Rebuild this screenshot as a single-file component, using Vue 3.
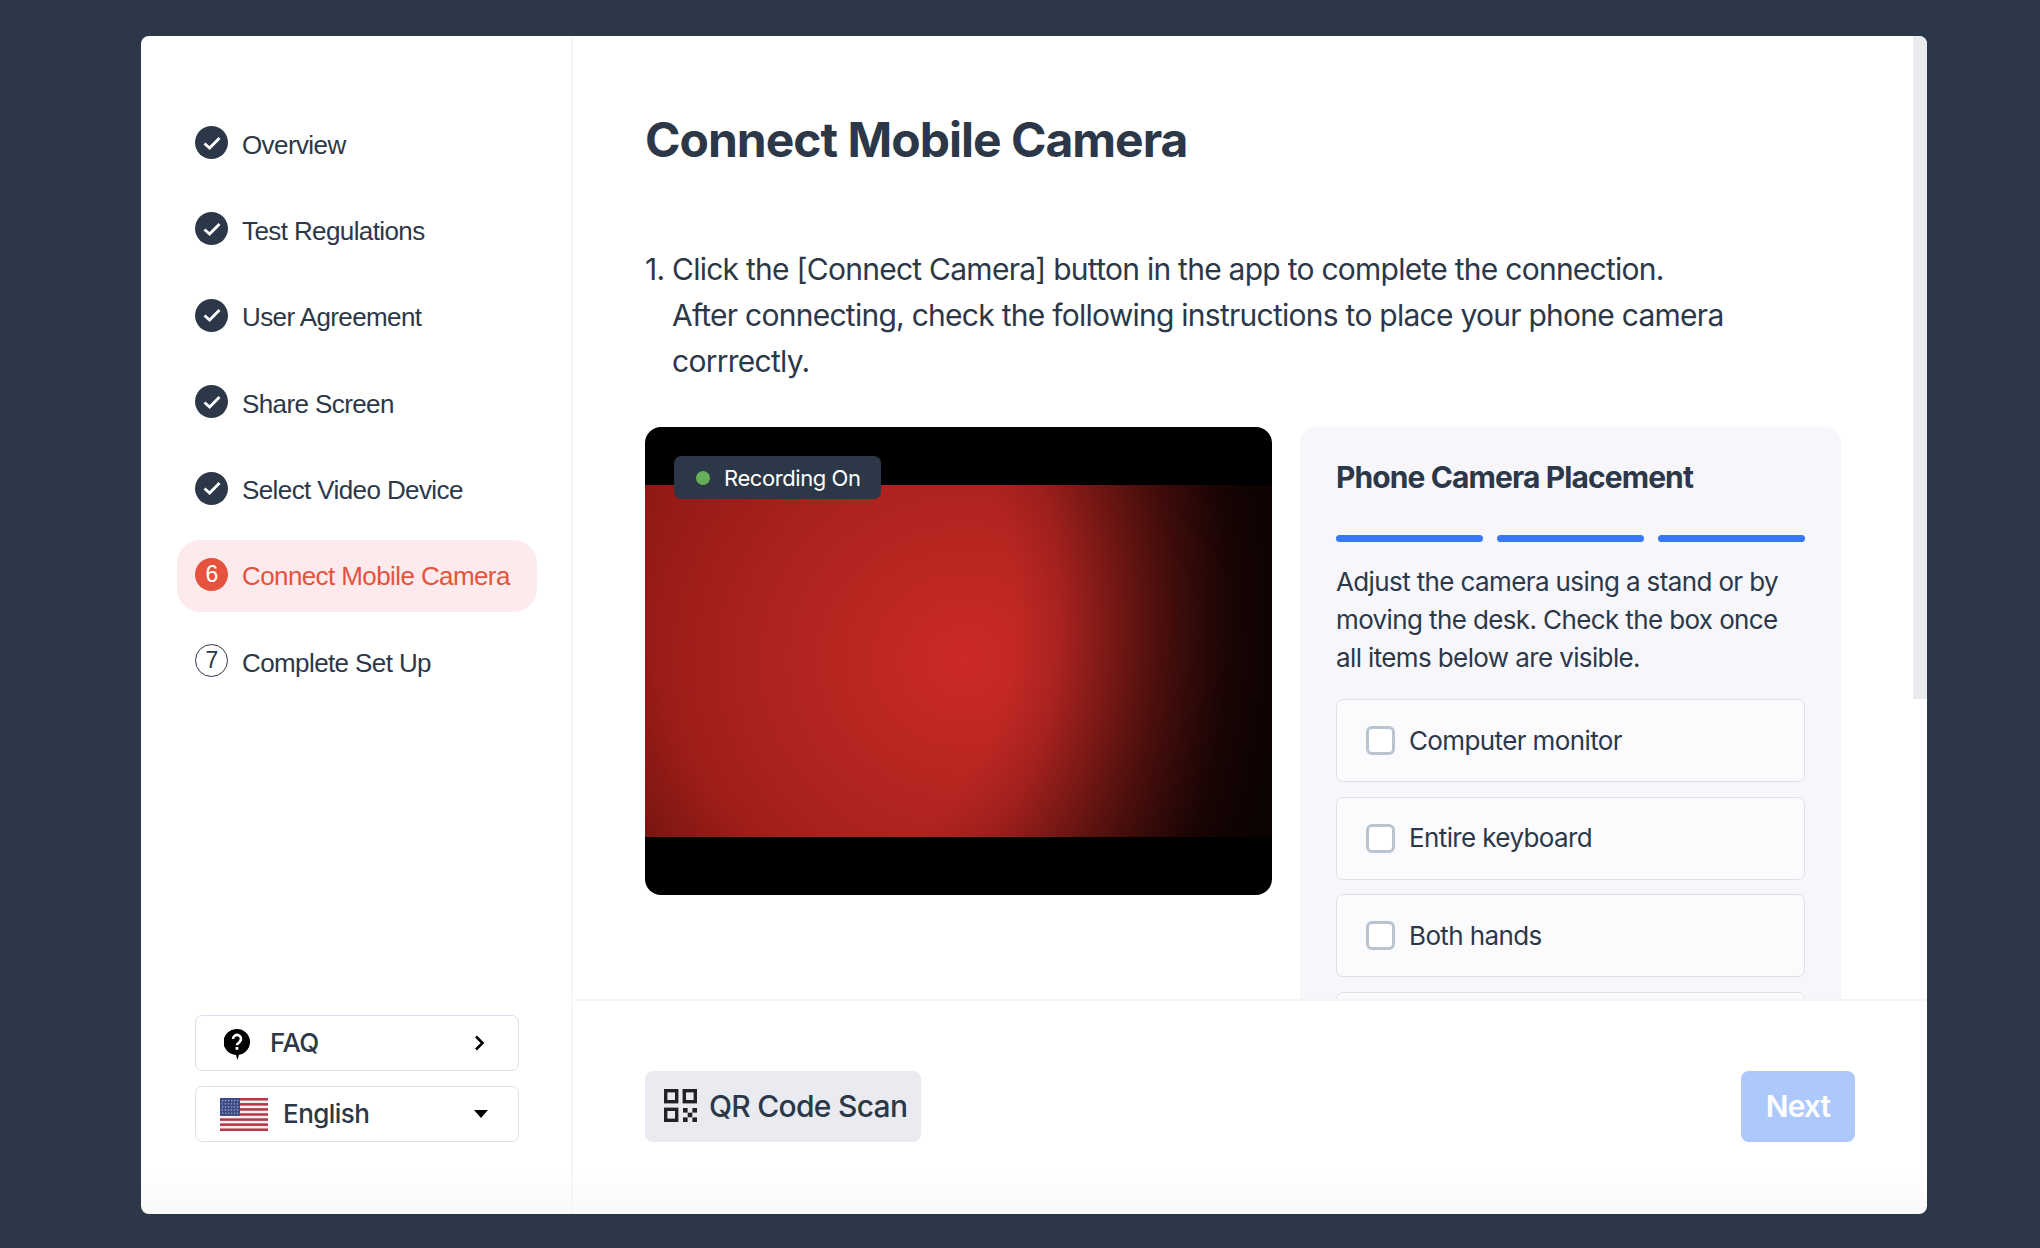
<script setup>
const steps = [
  { label: 'Overview', state: 'done' },
  { label: 'Test Regulations', state: 'done' },
  { label: 'User Agreement', state: 'done' },
  { label: 'Share Screen', state: 'done' },
  { label: 'Select Video Device', state: 'done' },
  { label: 'Connect Mobile Camera', state: 'active', n: 6 },
  { label: 'Complete Set Up', state: 'todo', n: 7 },
]
const checks = ['Computer monitor', 'Entire keyboard', 'Both hands', '']
const stripes = [0, 1, 2, 3, 4, 5, 6]
</script>

<template>
  <div class="page">
    <div class="card">
      <aside class="sidebar">
        <ul class="steps">
          <li v-for="s in steps" :key="s.label" class="step" :class="s.state">
            <span class="badge">
              <svg v-if="s.state === 'done'" width="20" height="16" viewBox="0 0 20 16">
                <path d="M2.5 8.5 L7.6 13 L17.5 3" fill="none" stroke="#fff" stroke-width="2.8" />
              </svg>
              <template v-else>{{ s.n }}</template>
            </span>
            <span class="step-label">{{ s.label }}</span>
          </li>
        </ul>
        <div class="side-bottom">
          <div class="side-btn faq">
            <svg class="faq-icon" width="26" height="31" viewBox="0 0 26 31">
              <path d="M13 0a13 13 0 0 1 2 25.85L13.4 31 12 26A13 13 0 0 1 13 0Z" fill="#000" />
              <path d="M9 10a4 4 0 1 1 6.2 3.3c-1.4.9-2.2 1.5-2.2 3" fill="none" stroke="#fff" stroke-width="2.6" />
              <rect x="11.6" y="18" width="2.8" height="2.8" fill="#fff" />
            </svg>
            <span class="side-label">FAQ</span>
            <svg class="chev" width="12" height="16" viewBox="0 0 12 16">
              <path d="M2 1.5 L8.5 8 L2 14.5" fill="none" stroke="#000" stroke-width="2.6" />
            </svg>
          </div>
          <div class="side-btn lang">
            <svg class="flag" width="48" height="33" viewBox="0 0 48 33">
              <rect width="48" height="33" fill="#f4f0f0" />
              <rect v-for="i in stripes" :key="i" x="0" :y="(i * 33) / 6.5" width="48" height="2.54" fill="#b5374a" />
              <rect width="20" height="17.8" fill="#3c4a86" />
              <g fill="#c9cbe4">
                <template v-for="r in 5" :key="r">
                  <circle v-for="c in 6" :key="c" :cx="c * 3 - 0.8 + (r % 2) * 0.6" :cy="r * 3.1 - 0.4" r="0.65" />
                </template>
              </g>
            </svg>
            <span class="side-label">English</span>
            <svg class="caret" width="14" height="8" viewBox="0 0 14 8">
              <path d="M0 0 H14 L7 8 Z" fill="#000" />
            </svg>
          </div>
        </div>
      </aside>

      <main class="main">
        <div class="scroll">
          <h1 class="title">Connect Mobile Camera</h1>
          <ol class="steps-text">
            <li>
              <span class="num">1.</span>
              <p>Click the [Connect Camera] button in the app to complete the connection.<br />After connecting, check the following instructions to place your phone camera corrrectly.</p>
            </li>
          </ol>
          <div class="media">
            <div class="video">
              <div class="feed"></div>
              <div class="rec"><i class="dot"></i>Recording On</div>
            </div>
            <section class="panel">
              <h2>Phone Camera Placement</h2>
              <div class="bars"><i></i><i></i><i></i></div>
              <p class="desc">Adjust the camera using a stand or by moving the desk. Check the box once all items below are visible.</p>
              <div v-for="(c, i) in checks" :key="i" class="check">
                <span class="box"></span>
                <span v-if="c" class="check-label">{{ c }}</span>
              </div>
            </section>
          </div>
        </div>
        <div class="thumb"></div>
        <footer class="footer">
          <button class="qr">
            <svg width="33" height="33" viewBox="0 0 33 33">
              <g fill="none" stroke="#222" stroke-width="3.4">
                <rect x="1.7" y="1.7" width="11" height="11" />
                <rect x="20.3" y="1.7" width="11" height="11" />
                <rect x="1.7" y="20.3" width="11" height="11" />
              </g>
              <g fill="#222">
                <rect x="19" y="19" width="4.6" height="4.6" /><rect x="28.4" y="19" width="4.6" height="4.6" />
                <rect x="23.7" y="23.7" width="4.6" height="4.6" />
                <rect x="19" y="28.4" width="4.6" height="4.6" /><rect x="28.4" y="28.4" width="4.6" height="4.6" />
              </g>
            </svg>
            QR Code Scan
          </button>
          <button class="next">Next</button>
        </footer>
      </main>
    </div>
  </div>
</template>

<style>
html, body { margin: 0; background: #2c3848; }
</style>

<style scoped>
.page {
  width: 2040px;
  height: 1248px;
  box-sizing: border-box;
  padding: 36px 0 0 141px;
  background: #2c3848;
  font-family: Inter, sans-serif;
  color: #2c3848;
}
.card {
  width: 1786px;
  height: 1178px;
  display: flex;
  border-radius: 8px;
  overflow: hidden;
  background: linear-gradient(to bottom, #fff 96.5%, #f9f9f9 100%);
}
.sidebar {
  width: 432px;
  flex: none;
  box-sizing: border-box;
  border-right: 2px solid #f4f5f7;
  padding: 72px 34px 72px 36px;
  display: flex;
  flex-direction: column;
  justify-content: space-between;
}
.steps { list-style: none; margin: 0; padding: 0; display: flex; flex-direction: column; gap: 14.4px; }
.step {
  height: 72px;
  display: flex;
  align-items: center;
  gap: 14px;
  padding-left: 18px;
  border-radius: 24px;
  font-family: "Liberation Sans", Arial, sans-serif;
  font-size: 26px;
  letter-spacing: -0.6px;
}
.step-label { margin-top: 2px; }
.badge {
  width: 33px;
  height: 33px;
  box-sizing: border-box;
  border-radius: 50%;
  display: flex;
  align-items: center;
  justify-content: center;
  flex: none;
  background: #2c3848;
  color: #fff;
  font-size: 23px;
  margin-top: -3px;
}
.step.active { background: #fceaec; color: #e5533f; }
.step.active .badge { background: #e5533f; }
.step.todo .badge { background: #fff; border: 1.5px solid #2c3848; color: #2c3848; }
.side-bottom { display: flex; flex-direction: column; gap: 15px; margin-left: 18px; margin-right: 18px; }
.side-btn {
  height: 56px;
  box-sizing: border-box;
  border: 1px solid #d8e1ec;
  border-radius: 7px;
  display: flex;
  align-items: center;
  font-size: 26px;
  font-weight: 500;
  letter-spacing: -0.55px;
}
.faq { padding: 0 32px 0 28px; }
.faq-icon { margin-right: 20px; margin-top: 3px; }
.lang { padding: 0 30px 0 24px; }
.flag { margin-right: 15px; }
.side-label { flex: 1; margin-top: -2px; }
.main { flex: 1; min-width: 0; position: relative; display: flex; flex-direction: column; }
.scroll { flex: 1; min-height: 0; overflow: hidden; padding: 0 86px 0 72px; }
.title { margin: 76px 0 0; font-size: 48px; line-height: 56px; font-weight: 700; letter-spacing: -1px; }
.steps-text { list-style: none; margin: 78px 0 0; padding: 0; font-size: 30px; line-height: 46px; letter-spacing: -0.74px; }
.steps-text li { display: flex; }
.num { width: 27px; flex: none; }
.steps-text p { margin: 0; }
.media { display: flex; align-items: flex-start; gap: 28px; margin-top: 43px; }
.video {
  width: 627px;
  height: 468px;
  flex: none;
  position: relative;
  display: flex;
  align-items: center;
  background: #000;
  border-radius: 16px;
  overflow: hidden;
}
.feed {
  width: 100%;
  height: 352px;
  background:
    radial-gradient(ellipse 450px 620px at 190px 36%, rgba(0, 0, 0, 0) 40%, rgba(0, 0, 0, 0.1) 50%, rgba(0, 0, 0, 0.3) 60%, rgba(0, 0, 0, 0.58) 73%, rgba(0, 0, 0, 0.85) 88%, rgba(0, 0, 0, 0.92) 100%),
    radial-gradient(ellipse 330px 310px at 51% 50%, #cb2a27 0%, #a8211c 70%, #961b15 100%);
}
.rec {
  position: absolute;
  left: 29px;
  top: 29px;
  height: 43px;
  padding: 0 21px 0 22px;
  display: flex;
  align-items: center;
  gap: 14px;
  border-radius: 7px;
  background: #2c3848;
  color: #fff;
  font-size: 22px;
  letter-spacing: -0.43px;
}
.dot { width: 14px; height: 14px; border-radius: 50%; background: #66ae5c; }
.panel {
  flex: 1;
  box-sizing: border-box;
  padding: 32px 36px 40px;
  background: #f6f6fb;
  border-radius: 16px 16px 0 0;
}
.panel h2 { margin: 0; font-size: 30px; line-height: 36px; font-weight: 700; letter-spacing: -0.9px; }
.bars { display: flex; gap: 14px; margin-top: 40px; }
.bars i { flex: 1; height: 7px; border-radius: 4px; background: #3878f6; }
.desc { margin: 21px 0 0; font-size: 26px; line-height: 38px; letter-spacing: -0.62px; }
.check {
  height: 83px;
  box-sizing: border-box;
  margin-top: 14.5px;
  display: flex;
  align-items: center;
  gap: 14px;
  padding-left: 29px;
  background: #fbfbfe;
  border: 1px solid #d8e1ec;
  border-radius: 7px;
  font-size: 26px;
  letter-spacing: -0.62px;
}
.check-label { margin-top: -1px; }
.desc + .check { margin-top: 22px; }
.box { width: 29px; height: 29px; box-sizing: border-box; border: 3px solid #b9c4d1; border-radius: 6px; background: #fff; }
.thumb { position: absolute; top: 0; right: 0; width: 14px; height: 663px; background: #e9ebee; }
.footer {
  height: 215px;
  flex: none;
  box-sizing: border-box;
  border-top: 2px solid #f4f5f7;
  padding: 70px 72px 0 72px;
  display: flex;
  justify-content: space-between;
  align-items: flex-start;
}
button { font-family: inherit; border: 0; border-radius: 8px; height: 71px; cursor: pointer; }
.qr {
  display: flex;
  align-items: center;
  gap: 12px;
  padding: 0 0 2px 19px;
  width: 276px;
  background: #e9ebf0;
  color: #2c3848;
  font-size: 30px;
  font-weight: 500;
  letter-spacing: -0.72px;
  white-space: nowrap;
}
.qr svg { flex: none; }
.next { width: 114px; background: #adc9fb; color: #fff; font-size: 30px; font-weight: 600; letter-spacing: -0.9px; padding-bottom: 2px; }
</style>
